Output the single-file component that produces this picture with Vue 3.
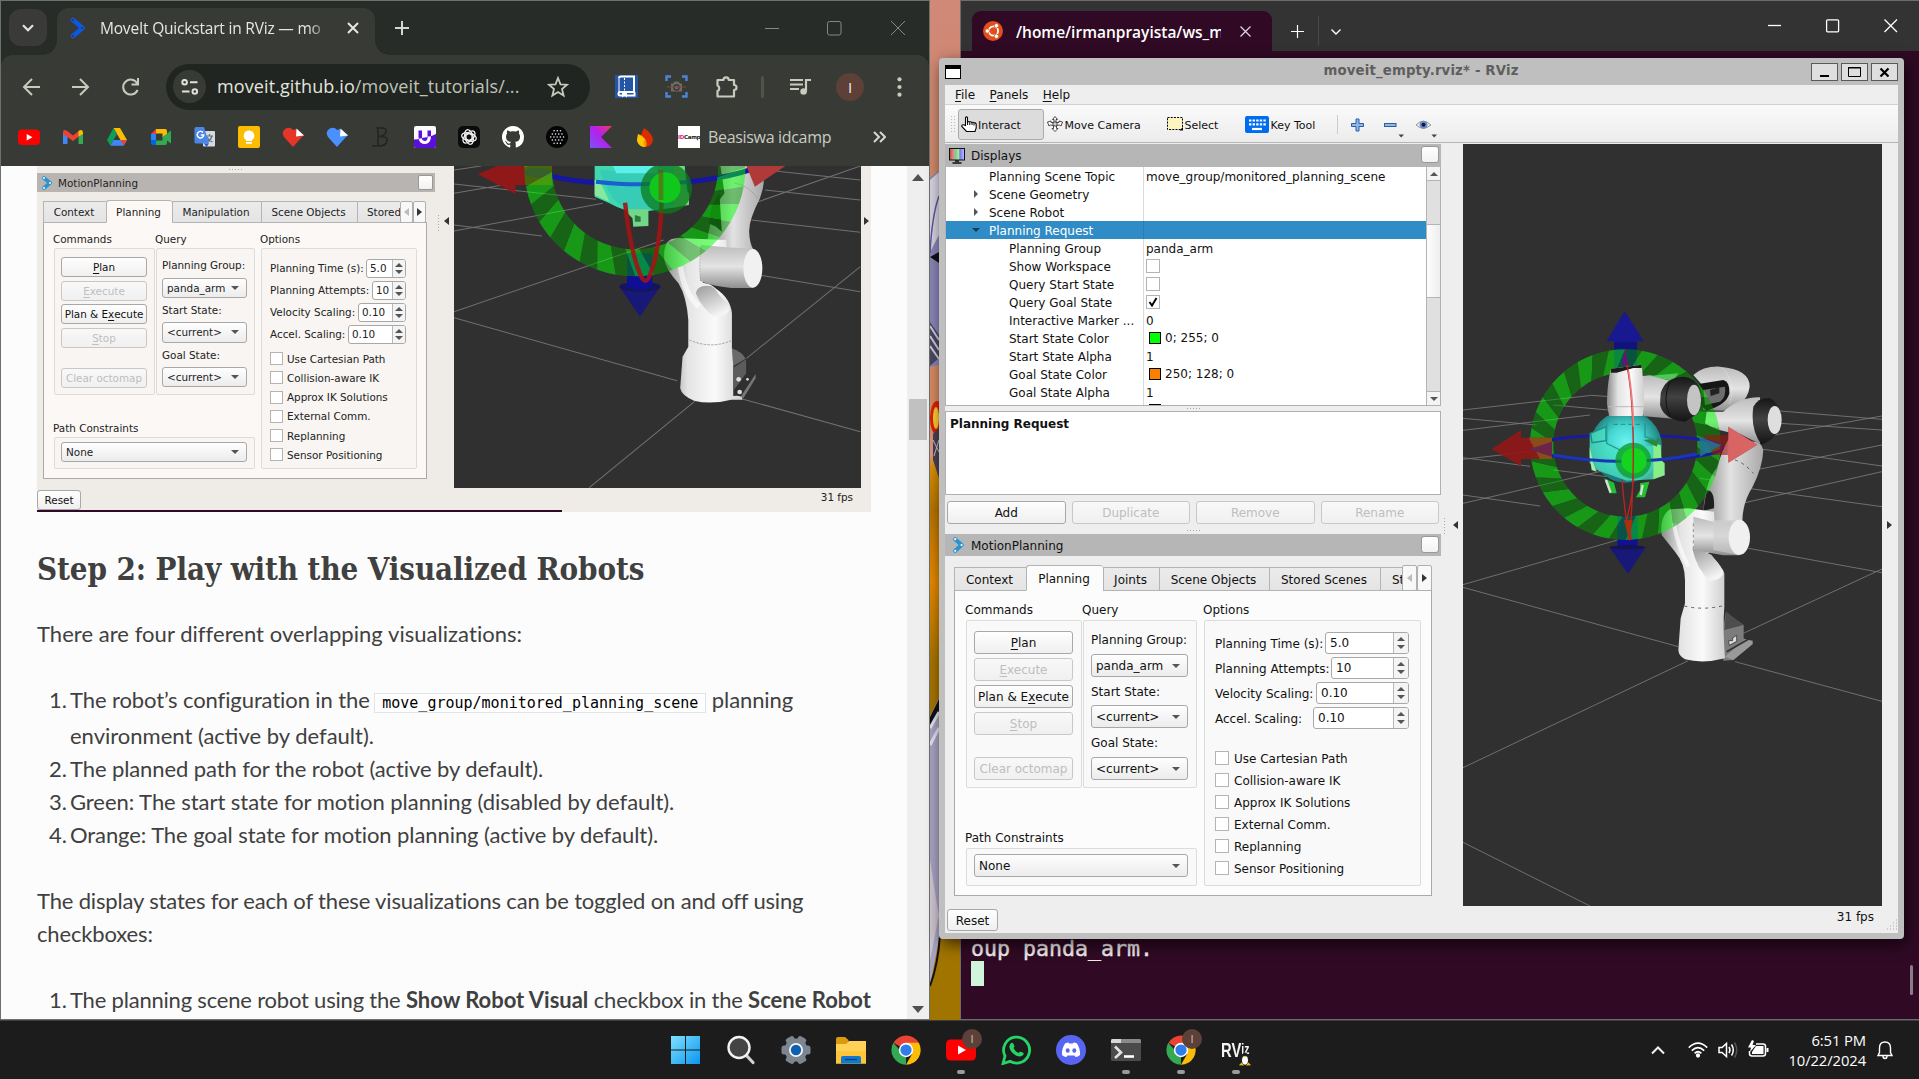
<script setup>
const bulkChecks = ['Use Cartesian Path', 'Collision-aware IK', 'Approx IK Solutions', 'External Comm.', 'Replanning', 'Sensor Positioning']

const treeRows = [
  { name: 'Planning Scene Topic', level: 1, value: 'move_group/monitored_planning_scene' },
  { name: 'Scene Geometry', level: 1, arrow: 'right' },
  { name: 'Scene Robot', level: 1, arrow: 'right' },
  { name: 'Planning Request', level: 1, arrow: 'down', selected: true },
  { name: 'Planning Group', level: 2, value: 'panda_arm' },
  { name: 'Show Workspace', level: 2, check: true },
  { name: 'Query Start State', level: 2, check: true },
  { name: 'Query Goal State', level: 2, check: true, on: true },
  { name: 'Interactive Marker ...', level: 2, value: '0' },
  { name: 'Start State Color', level: 2, color: '#00ff00', value: '0; 255; 0' },
  { name: 'Start State Alpha', level: 2, value: '1' },
  { name: 'Goal State Color', level: 2, color: '#fa8000', value: '250; 128; 0' },
  { name: 'Goal State Alpha', level: 2, value: '1' },
  { name: 'Colliding Link Color', level: 2, color: '#ff0000', value: '255; 0; 0' },
]

const spins = [
  { label: 'Planning Time (s):', value: '5.0', w: 84, sw: 40 },
  { label: 'Planning Attempts:', value: '10', w: 78, sw: 34 },
  { label: 'Velocity Scaling:', value: '0.10', w: 93, sw: 48 },
  { label: 'Accel. Scaling:', value: '0.10', w: 96, sw: 58 },
]

function ringSegments(cx, cy, ro, ri, n, skew) {
  const pt = (r, a) => `${(cx + r * Math.cos(a)).toFixed(1)} ${(cy + r * Math.sin(a)).toFixed(1)}`
  const out = []
  const step = (Math.PI * 2) / n
  for (let i = 0; i < n; i++) {
    const a = i * step
    const b = a + step
    out.push({
      d: `M${pt(ro, a)} A${ro} ${ro} 0 0 1 ${pt(ro, b)} L${pt(ri, b + skew)} A${ri} ${ri} 0 0 0 ${pt(ri, a + skew)}Z`,
      fill: i % 2 ? '#009800' : '#00ff00',
    })
  }
  return out
}
const ring = ringSegments(556, 464, 286, 216, 36, -0.14)
const shotRing = ringSegments(575, 22, 327, 246, 36, 0.12)
</script>

<template>
  <div class="desktop">
    <svg class="wallpaper" width="31" height="1020" viewBox="0 0 31 1020">
      <defs>
        <linearGradient id="wp" x1="0" y1="0" x2="0" y2="1">
          <stop offset="0" stop-color="#d08878" /><stop offset=".17" stop-color="#d08a6c" />
          <stop offset=".4" stop-color="#d98b62" /><stop offset=".445" stop-color="#e39a88" />
          <stop offset=".46" stop-color="#d99000" /><stop offset=".5" stop-color="#b87400" />
          <stop offset=".57" stop-color="#e88a00" /><stop offset=".65" stop-color="#a87400" /><stop offset="1" stop-color="#a07400" />
        </linearGradient>
      </defs>
      <rect width="31" height="1020" fill="url(#wp)" />
      <path d="M0 178 L9 171 V365 L0 367Z" fill="#8a86b8" />
      <path d="M0 180 L9 172 V235 L0 252Z" fill="#d8d4e2" />
      <path d="M0 253 Q2 215 9 196" stroke="#5a56a0" stroke-width="1.5" fill="none" />
      <path d="M0 257 L9 252 V263Z" fill="#111" />
      <path d="M0 322 L9 335 V358 L0 366Z" fill="#4b4862" />
      <path d="M0 326 L9 340 M0 336 L9 350 M0 346 L9 359" stroke="#d0cde0" stroke-width="2" />
      <ellipse cx="7" cy="418" rx="7" ry="17" fill="#e02000" />
      <ellipse cx="6" cy="418" rx="3" ry="11" fill="#ffd030" />
      <path d="M3 434 L9 428 V478 L3 460Z" fill="#4b4250" />
      <path d="M3 440 L9 452 M4 456 L9 440" stroke="#cfc9d8" />
      <path d="M0 716 L9 698 V939 L0 986Z" fill="#a9a3c2" />
      <path d="M0 717 L9 699 V712 L0 728Z" fill="#111" />
      <path d="M0 728 L9 712 M0 745 L9 728" stroke="#e4e2f2" stroke-width="3" />
      <path d="M0 860 L7 905 L9 915 L0 960Z" fill="#cfc6d2" />
      <path d="M0 986 Q8 965 10 935" stroke="#111" stroke-width="2" fill="none" />
    </svg>

    <!-- Browser window -->
    <section class="chrome">
      <div class="tabstrip">
        <span class="tabsearch"><svg width="12" height="8" viewBox="0 0 12 8"><path d="M1 1.2 L6 6.2 L11 1.2" fill="none" stroke="#e4e4e0" stroke-width="2.2" /></svg></span>
        <div class="ctab">
          <svg class="fav" width="16" height="22" viewBox="0 0 16 22"><path d="M3 3 L12.500 11 L3 19" fill="none" stroke="#0b57e8" stroke-width="4.600" stroke-linecap="round" stroke-linejoin="round" /><circle cx="3" cy="3" r="1.200" fill="#3b3e38" /><circle cx="12" cy="11" r="1.200" fill="#3b3e38" /><circle cx="3" cy="19" r="1.200" fill="#3b3e38" /></svg>
          <span class="ctitle">MoveIt Quickstart in RViz — mo</span>
          <svg width="12" height="12" viewBox="0 0 12 12"><path d="M1 1 L11 11 M11 1 L1 11" stroke="#e6e6e2" stroke-width="2" /></svg>
        </div>
        <svg class="newtab" width="14" height="14" viewBox="0 0 14 14"><path d="M7 0 V14 M0 7 H14" stroke="#d5d8d0" stroke-width="2" /></svg>
        <svg class="winctl" width="142" height="16" viewBox="0 0 142 16" fill="none" stroke="#858880" stroke-width="1"><path d="M0 8.500 H14" /><rect x="62.500" y="1.500" width="13.500" height="13.500" rx="2" /><path d="M126 1 L140 15 M140 1 L126 15" /></svg>
      </div>
      <div class="toolbar">
        <svg class="nav" width="118" height="22" viewBox="0 0 118 22" fill="none" stroke="#c6cbbd" stroke-width="2">
          <path d="M18 11 H2 M10 3 L2 11 L10 19" /><path d="M50 11 H66 M58 3 L66 11 L58 19" />
          <path d="M115.300 7.500 A7.500 7.500 0 1 0 115.600 14 M116 2 V8.500 H109.500" />
        </svg>
        <div class="omni">
          <span class="site"><svg width="18" height="16" viewBox="0 0 18 16" fill="none" stroke="#dfe2da" stroke-width="2"><circle cx="3.600" cy="3.200" r="2.300" /><path d="M9 3.200 H16.500 M1 12.500 H8.500" /><circle cx="13.800" cy="12.500" r="2.300" /></svg></span>
          <span class="url">moveit.github.io<i>/moveit_tutorials/...</i></span>
          <svg width="22" height="22" viewBox="0 0 22 22"><path d="M11 2 L13.500 8.300 L20 8.700 L15 13 L16.600 19.500 L11 16 L5.400 19.500 L7 13 L2 8.700 L8.500 8.300Z" fill="none" stroke="#c6cbbd" stroke-width="1.800" /></svg>
        </div>
        <svg class="ext e1" width="23" height="23" viewBox="0 0 23 23"><rect width="23" height="23" fill="#2456a8" /><path d="M4 3 Q4 1.500 6 1.500 H19 V17 H5 Q3.500 17 3.500 19 Q3.500 20.500 5 20.500 H19.500 V17" fill="none" stroke="#fff" stroke-width="2" /><path d="M4 2 V18" stroke="#fff" stroke-width="1" /><path d="M9.500 3 V16" stroke="#fff" stroke-dasharray="2 1.500" /><path d="M7 17.500 h5 v5 l-2.500-2 l-2.500 2z" fill="#fff" /></svg>
        <svg class="ext" width="23" height="23" viewBox="0 0 23 23" fill="none"><path d="M1.500 6 V1.500 H6 M17 1.500 H21.500 V6 M21.500 17 V21.500 H17 M6 21.500 H1.500 V17" stroke="#4a86d8" stroke-width="2.400" /><path d="M6 8.500 h2 l1.500-2 h4 l1.500 2 h2 v8 h-11z" fill="#6a6c66" /><circle cx="11.500" cy="12.500" r="2.600" stroke="#333" stroke-width="1.200" /><path d="M2 12 H21" stroke="#8b4238" stroke-width="1" /></svg>
        <svg class="ext" width="24" height="24" viewBox="0 0 24 24"><path d="M2.500 5 H8.500 A2.600 2.600 0 0 1 13.700 5 H19 V10 A2.400 2.400 0 0 1 19 15 V21.500 H2.500 V16 A3 3 0 0 0 2.500 10.500Z" fill="none" stroke="#c6cbbd" stroke-width="2.200" stroke-linejoin="round" /></svg>
        <i class="vsep"></i>
        <svg class="list" width="22" height="18" viewBox="0 0 22 18"><path d="M0 2 H13 M0 6.500 H13 M0 11 H9" stroke="#c6cbbd" stroke-width="2" /><path d="M16 13 V2 H21" fill="none" stroke="#c6cbbd" stroke-width="2.200" /><circle cx="13.600" cy="13.500" r="3.300" fill="#c6cbbd" /></svg>
        <span class="avatar">I</span>
        <svg class="dots3" width="5" height="20" viewBox="0 0 5 20" fill="#c6cbbd"><circle cx="2.500" cy="2.300" r="2.100" /><circle cx="2.500" cy="10" r="2.100" /><circle cx="2.500" cy="17.700" r="2.100" /></svg>
      </div>
      <div class="bookmarks">
        <span><svg viewBox="0 0 22 22"><rect y="3.500" width="22" height="15.500" rx="4" fill="#f00" /><path d="M8.700 8 V14.500 L14.500 11.200Z" fill="#fff" /></svg></span>
        <span><svg viewBox="0 0 22 22"><path d="M1 6 V18 H5.500 V9.500Z" fill="#4285f4" /><path d="M21 6 V18 H16.500 V9.500Z" fill="#34a853" /><path d="M1 6.500 Q1 3 4.500 4.500 L11 9.500 L17.500 4.500 V10 L11 15 L1 8Z" fill="#ea4335" /><path d="M16.500 10.500 V5 Q20.500 2.500 21 6.500 V8Z" fill="#fbbc04" /></svg></span>
        <span><svg viewBox="0 0 22 22"><path d="M7.500 2 H14 L21 14 H14.500Z" fill="#fbbc04" /><path d="M7.500 2 L11 8 L4.300 19.500 L1 14Z" fill="#0f9d58" /><path d="M4.300 19.800 L7.500 14 H21 L17.700 19.800Z" fill="#4285f4" /><path d="M14.500 14 H21 L17.700 19.500Z" fill="#ea4335" /></svg></span>
        <span><svg viewBox="0 0 22 22"><path d="M1 8 L6 3 V8Z" fill="#ea4335" /><path d="M6 3 H15 Q17 3 17 5 V11 H12.500 V7.500 H6Z" fill="#fbbc04" /><rect x="1" y="8" width="5" height="6.500" fill="#2684fc" /><path d="M1 14 H6 V19 H3 Q1 19 1 17Z" fill="#0066da" /><path d="M6 14.500 H12.500 V11 L21 4.500 V17.500 L17 14.500 V17 Q17 19 15 19 H6Z" fill="#34a853" /></svg></span>
        <span><svg viewBox="0 0 22 22"><rect x="9" y="5" width="12" height="15.500" rx="1" fill="#d6dbe0" /><path d="M12 10 h7 M15.500 8 v2 M13 16 Q17 14 18 10 M13 11 Q15 15 18.500 16" stroke="#607080" stroke-width="1.200" fill="none" /><path d="M2 1 H10 L15 17.500 H2 Q.5 17.500 .5 16 V2.500 Q.5 1 2 1Z" fill="#4a86e8" /><path d="M10 17.500 H15 L12.500 21Z" fill="#2a56c6" /><path d="M9 6.500 A3.300 3.300 0 1 0 9.800 9 H6.800" stroke="#fff" stroke-width="1.400" fill="none" /></svg></span>
        <span><svg viewBox="0 0 22 22"><rect width="22" height="22" rx="2" fill="#fbbc04" /><path d="M11 4.500 a5.200 5.200 0 0 1 3 9.500 v1 h-6 v-1 a5.200 5.200 0 0 1 3-9.500z M8 16 h6 v1.800 h-6z" fill="#fff" /></svg></span>
        <span v-for="c in ['#e53528', '#4a90ff']" :key="c"><svg viewBox="0 0 22 22"><path d="M11 21 L2 11 Q-1 6 3 3 Q8 0 11 4 L14 3 L22 9 L19 12Z" :fill="c" /><path d="M14.500 2.500 L22 9.500 L14 10.500Z" fill="#fff" /></svg></span>
        <span class="bee"><svg viewBox="0 0 22 22"><path d="M6 2 H12 Q17 2 16 6 Q15 10 9 10.500 M9 10.500 Q18 10 17 15 Q16 20 9 20 H2 M8 3 V19" stroke="#22251f" stroke-width="1.600" fill="none" /></svg></span>
        <span><svg viewBox="0 0 22 22"><rect width="22" height="22" rx="2" fill="#fbfaff" /><path d="M0 13.500 Q4 13.500 8 12 L14 11 Q18 10 22 8 V20 Q22 22 20 22 H2 Q0 22 0 20Z" fill="#5a10d8" /><path d="M4.500 4.500 H8 V11 Q8 13 9 13.500 L6 15 Q4.500 13 4.500 11Z M13.500 4.500 H17 V10 L13.500 11.500Z" fill="#5a10d8" /><path d="M6.200 12.500 Q7 16.500 11 16.500 Q15 16.500 15.400 10.500" stroke="#fff" stroke-width="3.200" fill="none" /></svg></span>
        <span><svg viewBox="0 0 22 22"><rect width="22" height="22" rx="5" fill="#0b0b0b" /><g fill="none" stroke="#f2f2f2" stroke-width="1.300"><ellipse v-for="a in [0, 60, 120]" :key="a" cx="11" cy="11" rx="7.500" ry="4" :transform="`rotate(${a + 15} 11 11)`" /><path d="M11 7.500 L14 9.200 V12.800 L11 14.500 L8 12.800 V9.200Z" /></g></svg></span>
        <span><svg viewBox="0 0 16 16"><path fill="#fff" d="M8 0C3.580 0 0 3.580 0 8c0 3.540 2.290 6.530 5.470 7.590.4.070.55-.17.55-.38 0-.19-.01-.82-.01-1.490-2.010.37-2.530-.49-2.690-.94-.09-.23-.48-.94-.82-1.130-.28-.15-.68-.52-.01-.53.63-.01 1.080.58 1.230.82.72 1.210 1.870.87 2.330.66.070-.52.28-.87.51-1.070-1.780-.2-3.640-.89-3.640-3.950 0-.87.31-1.590.82-2.150-.08-.2-.36-1.020.08-2.120 0 0 .67-.21 2.200.82.64-.18 1.320-.27 2-.27s1.360.09 2 .27c1.530-1.040 2.200-.82 2.200-.82.44 1.100.16 1.920.08 2.120.51.56.82 1.270.82 2.150 0 3.070-1.870 3.750-3.650 3.950.29.25.54.73.54 1.480 0 1.070-.01 1.930-.01 2.200 0 .21.15.46.55.38A8.010 8.010 0 0 0 16 8c0-4.420-3.580-8-8-8z" /></svg></span>
        <span><svg viewBox="0 0 22 22"><circle cx="11" cy="11" r="11" fill="#050505" /><g stroke="#e8e8e8" stroke-width="1.500" stroke-linecap="round" stroke-dasharray="0.100 3.100"><path d="M8 4.800 H15 M6.300 7.900 H17 M4.700 11 H18 M6.300 14.100 H17 M8 17.200 H15" /></g></svg></span>
        <span><svg viewBox="0 0 22 22"><defs><linearGradient id="kt" x1="1" y1="0" x2="0" y2="1"><stop offset="0" stop-color="#f03a5f" /><stop offset=".45" stop-color="#b81fe8" /><stop offset="1" stop-color="#7a52ff" /></linearGradient></defs><path d="M0 0 H22 L11 11 L22 22 H0Z" fill="url(#kt)" /></svg></span>
        <span><svg viewBox="0 0 22 22"><path d="M10 2 Q18 7 19 14 Q18 20 12 21 Q4 19 6 11 Q8 7 10 2Z" fill="#dd2c00" /><path d="M4 8 Q3 12 3 15 Q5 21 11 21 Q13 18 11 13 Q8 9 4 8Z" fill="#ffc400" /><path d="M11 13 Q14 18 11.500 21 Q8 19 11 13Z" fill="#ff9100" /></svg></span>
        <span class="idc"><b><i>ID</i>Camp</b></span>
        <em>Beasiswa idcamp</em>
        <svg class="more" width="13" height="12" viewBox="0 0 13 12"><path d="M1 1 L6 6 L1 11 M7 1 L12 6 L7 11" fill="none" stroke="#d5d8d0" stroke-width="2" /></svg>
      </div>

      <div class="viewport">
        <div class="page">
          <div class="shot">
            <div class="sdock">
              <div class="sdots"></div>
              <div class="dockhead"><svg width="10" height="14" viewBox="0 0 10 14"><path d="M2 2 L8 7 L2 12" fill="none" stroke="#2a94d0" stroke-width="3.600" stroke-linecap="round" /><circle cx="2" cy="2" r="1" fill="#fff" /><circle cx="8" cy="7" r="1" fill="#fff" /><circle cx="2" cy="12" r="1" fill="#fff" /></svg><span>MotionPlanning</span><i class="sq"></i></div>
              <div class="tabs">
                <span style="width:63px">Context</span><span class="on" style="width:66px">Planning</span><span style="width:89px">Manipulation</span><span style="width:96px">Scene Objects</span><span class="cut" style="width:43px">Stored</span>
                <b class="dim"><i></i></b><b><i></i></b>
              </div>
              <div class="pane">
                <div class="lcol">
                  <div class="duo">
                    <div class="c1"><label>Commands</label>
                      <div class="grp cmds"><button><u>P</u>lan</button><button class="off"><u>E</u>xecute</button><button>Plan &amp; E<u>x</u>ecute</button><button class="off"><u>S</u>top</button><button class="off last">Clear octomap</button></div></div>
                    <div class="c2"><label>Query</label>
                      <div class="grp query"><p>Planning Group:</p><div class="combo">panda_arm</div><p>Start State:</p><div class="combo">&lt;current&gt;</div><p>Goal State:</p><div class="combo">&lt;current&gt;</div></div></div>
                  </div>
                  <label class="pathl">Path Constraints</label>
                  <div class="grp path"><div class="combo">None</div></div>
                </div>
                <div class="rcol"><label>Options</label>
                  <div class="grp opts">
                    <div v-for="s in spins" :key="s.label" class="spinrow"><span>{{ s.label }}</span><div class="spin" :style="{ width: s.sw + 'px' }">{{ s.value }}<b></b></div></div>
                    <div class="checks"><div v-for="c in bulkChecks" :key="c"><i class="cb"></i>{{ c }}</div></div>
                  </div></div>
              </div>
              <button class="reset">Reset</button>
            </div>
            <div class="sash"><i class="vd"></i><i class="tri l"></i></div>
            <div class="sview">
              <svg width="407" height="322" viewBox="0 0 407 322">
                <rect width="407" height="322" fill="#303030" />
                <g transform="translate(-13.500 -6) scale(.33807 .33333)">
                  <g stroke="#707070" stroke-width="3" fill="none">
                    <path d="M40 30 L120 18 M40 72 L460 118 M40 100 L330 50 M940 125 L1242 18 M960 90 L1242 120 M960 30 L1242 60 M40 195 L300 228 M40 213 L480 130 M920 180 L1242 217 M40 455 L660 240 M940 345 L1242 395 M40 473 L700 662 M905 595 L1242 320 M890 716 L1242 815 M752 724 L440 983" />
                  </g>
                  <path d="M860 560 Q880 570 906 598 L908 636 L932 642 L894 718 L850 720Z" fill="#2f2f2f" />
                  <path d="M862 565 Q890 575 903 596 L866 618Z" fill="#6a6a6a" /><path d="M868 622 L904 598 V640 L868 690Z" fill="#5c5c5c" /><path d="M932 642 V655 L896 715 L888 710Z" fill="#777" /><circle cx="882" cy="658" r="7" fill="#ddd" /><circle cx="885" cy="696" r="7" fill="#ddd" /><circle cx="908" cy="658" r="4" fill="#ddd" />
                  <path d="M828 18 H955 Q962 70 945 115 Q912 180 913 215 Q914 250 926 270 L845 300 L790 240 Q800 150 840 100Z" fill="url(#met2)" />
                  <path d="M870 70 Q910 75 938 115" fill="none" stroke="#8b8b8b" stroke-width="2" stroke-dasharray="7 3" />
                  <path d="M662 300 Q658 250 682 238 L700 234 L845 240 L850 300 L775 368 Q800 370 815 386 Q858 415 862 460 V565 L866 618 V708 Q895 705 893 719 H860 Q800 735 750 722 Q714 708 709 685 L716 590 L733 560 V480 Q728 410 704 370 Q668 330 662 300Z" fill="url(#met)" />
                  <path d="M755 400 Q760 372 800 378 Q815 386 822 402 L855 440 Q855 470 810 472 Q770 440 755 400Z" fill="url(#dim)" />
                  <path d="M710 320 Q720 400 765 440" stroke="#fff" stroke-width="16" fill="none" opacity=".6" />
                  <path d="M736 540 Q800 568 860 542" stroke="#888" stroke-width="2" fill="none" stroke-dasharray="8 3" />
                  <path d="M770 255 L845 262 L925 266 V384 H860 Q790 375 768 362Z" fill="url(#metv)" /><ellipse cx="924" cy="325" rx="28" ry="58" fill="#f1f1f1" />
                  <path d="M770 260 Q765 310 769 362" stroke="#888" stroke-width="2" fill="none" stroke-dasharray="6 3" />
                  <path d="M793 190 Q800 130 825 100 L832 215 L815 200Z" fill="#1e1e1e" />
                  <path d="M250 26 Q380 75 585 72 Q800 70 920 28" fill="none" stroke="#1616a0" stroke-width="15" />
                  <path d="M110 42 L222 -5 V15 H330 V75 H222 V102Z" fill="#901818" /><path d="M248 18 H330 V75 H250Z" fill="#8a4c18" opacity=".6" /><ellipse cx="288" cy="38" rx="40" ry="15" fill="#6c2468" opacity=".8" /><path d="M905 18 H1020 L930 80Z" fill="#b03a3a" />
                  <path d="M456 18 H722 L735 130 L700 142 L620 152 Q560 165 500 130 L456 110Z" fill="#3fd8b0" />
                  <path d="M470 30 Q500 120 540 140 Q620 170 680 120 V40Z" fill="#35c9b8" opacity=".8" /><path d="M510 18 H640 V40 H520Z" fill="#5cf0ea" />
                  <path d="M456 60 L470 60 L500 125 L456 105Z" fill="#8ae89a" /><path d="M690 18 H722 V90 L735 100 V135 L690 142Z" fill="#6fd877" />
                  <path d="M460 65 Q580 80 730 66" fill="none" stroke="#1a5fd0" stroke-width="12" />
                  <path d="M553 148 H615 V198 L570 200 L568 175 L553 160Z" fill="#70d887" /><path d="M575 165 L592 170 V185 H575Z" fill="#2c7a40" />
                  <path d="M552 280 H626 V385 H552Z" fill="#10108a" /><path d="M528 378 H651 L590 470Z" fill="#181878" /><ellipse cx="590" cy="380" rx="61" ry="15" fill="#15155e" /><path d="M552 350 H626 V380 Q590 396 552 380Z" fill="#0e0e96" />
                  <g opacity=".5"><path v-for="(s, i) in shotRing" :key="i" :d="s.d" :fill="s.fill" /></g>
                  <path d="M546 128 Q562 280 594 350 Q606 375 618 350 Q652 260 654 120" fill="none" stroke="#a01515" stroke-width="13" opacity=".9" />
                  <circle cx="668" cy="85" r="76" fill="#0a7a1a" opacity=".75" /><circle cx="664" cy="83" r="46" fill="#10c81c" />
                  <path d="M652 30 V120" stroke="#8a3a10" stroke-width="14" opacity=".5" />
                </g>
              </svg>
              <div class="sfps">31 fps</div>
            </div>
            <div class="sash r"><i class="tri r"></i></div>
          </div>
          <article>
            <h2>Step 2: Play with the Visualized Robots</h2>
            <p class="lead">There are four different overlapping visualizations:</p>
            <ol>
              <li><div class="first">The robot’s configuration in the <code>move_group/monitored_planning_scene</code> planning</div>environment (active by default).</li>
              <li class="k2">The planned path for the robot (active by default).</li>
              <li class="k3">Green: The start state for motion planning (disabled by default).</li>
              <li class="k4">Orange: The goal state for motion planning (active by default).</li>
            </ol>
            <p class="two">The display states for each of these visualizations can be toggled on and off using<br />checkboxes:</p>
            <ol><li class="k5">The planning scene robot using the <strong>Show Robot Visual</strong> checkbox in the <strong>Scene Robot</strong></li></ol>
          </article>
        </div>
        <div class="vscroll"><i class="up"></i><i class="thumb"></i><i class="down"></i></div>
      </div>
    </section>

    <!-- Terminal window -->
    <section class="term">
      <header>
        <div class="ttab">
          <svg width="20" height="20" viewBox="0 0 20 20"><circle cx="10" cy="10" r="10" fill="#e04e1b" /><circle cx="10.500" cy="10" r="4.600" fill="none" stroke="#fff" stroke-width="1.800" /><g fill="#fff" stroke="#e04e1b" stroke-width=".8"><circle cx="4.300" cy="10" r="2.200" /><circle cx="13.400" cy="4.700" r="2.200" /><circle cx="13.400" cy="15.300" r="2.200" /></g></svg>
          <span>/home/irmanprayista/ws_m</span>
          <svg width="11" height="11" viewBox="0 0 11 11"><path d="M.5 .5 L10.500 10.500 M10.500 .5 L.5 10.500" stroke="#e0dade" stroke-width="1.200" /></svg>
        </div>
        <svg class="tplus" width="13" height="13" viewBox="0 0 13 13"><path d="M6.500 0 V13 M0 6.500 H13" stroke="#fff" stroke-width="1.200" /></svg>
        <i class="tsep"></i>
        <svg class="tchev" width="10" height="6" viewBox="0 0 10 6"><path d="M.5 .5 L5 5 L9.500 .5" fill="none" stroke="#fff" stroke-width="1.400" /></svg>
        <svg class="twin" width="130" height="14" viewBox="0 0 130 14" fill="none" stroke="#fff" stroke-width="1.300"><path d="M0 6.500 H13" /><rect x="58.600" y=".8" width="12" height="12" rx="1" /><path d="M116.500 .5 L129 13 M129 .5 L116.500 13" /></svg>
      </header>
      <div class="tbody"><div class="tline">oup panda_arm.</div><i class="cursor"></i></div>
      <i class="tscroll"></i>
    </section>

    <!-- RViz window -->
    <section class="rviz">
      <header><i class="wicon"></i><b>moveit_empty.rviz* - RViz</b>
        <span><svg width="27" height="18" viewBox="0 0 27 18"><rect x=".5" y=".5" width="26" height="17" fill="#dfdfdf" stroke="#5a5a5a" /><path d="M9 13 H18" stroke="#000" stroke-width="2" /></svg><svg width="27" height="18" viewBox="0 0 27 18"><rect x=".5" y=".5" width="26" height="17" fill="#dfdfdf" stroke="#5a5a5a" /><path d="M7.500 13.500 V4.500 H19.500 V13.500Z M7 5 H20" fill="none" stroke="#000" /></svg><svg width="27" height="18" viewBox="0 0 27 18"><rect x=".5" y=".5" width="26" height="17" fill="#dfdfdf" stroke="#5a5a5a" /><path d="M9.500 5.500 L17.500 13.500 M17.500 5.500 L9.500 13.500" stroke="#000" stroke-width="2.200" /></svg></span>
      </header>
      <div class="inner">
        <nav><span><u>F</u>ile</span><span><u>P</u>anels</span><span><u>H</u>elp</span></nav>
        <div class="rtools">
          <i class="handle"></i>
          <span class="tool act"><svg width="17" height="17" viewBox="0 0 17 17"><path d="M4.500 9.500 V1.500 Q5.500 .3 6.500 1.500 V6 Q7.500 5 8.600 6 Q9.800 5.300 10.800 6.500 Q12 5.800 13 7 Q14.500 6.500 15.200 8 V12 L14 15.500 H5.500 L.8 10.500 Q.5 8.500 2.500 8.800Z" fill="#fff" stroke="#000" stroke-width="1.100" /><path d="M6.600 6 V9 M8.800 6.500 V9 M11 6.800 V9 M13 7.500 V9.500" stroke="#000" /></svg><b>Interact</b></span>
          <span class="tool t2"><svg width="16" height="16" viewBox="0 0 16 16" fill="#fff" stroke="#333" stroke-width=".9"><path d="M8 .5 L10.500 3.500 H9 V6.500 H12 L12 5 L15.500 6 L14 10 L12.500 9 L9.500 9.500 V12.500 H11 L8 15.500 L5 12.500 H6.500 V9.500 L3.500 9 L2 10 L.5 6 L4 5 V6.500 H7 V3.500 H5.500Z" /><circle cx="8" cy="8" r="2.200" fill="#ccc" /></svg><b>Move Camera</b></span>
          <span class="tool t3"><svg width="16" height="14" viewBox="0 0 16 14"><rect x=".5" y=".5" width="15" height="12" fill="#fdf5bf" stroke="#000" stroke-dasharray="2 1.200" /><path d="M16 10 V13.500 H12.500Z" /></svg><b>Select</b></span>
          <span class="tool t4"><svg width="24" height="17" viewBox="0 0 24 17"><rect width="24" height="17" rx="2" fill="#006cf0" /><path d="M4 4.500 H21 M4 8.300 H21" stroke="#fff" stroke-width="2.200" stroke-dasharray="2.400 1.200" /><path d="M7 13 H17" stroke="#fff" stroke-width="2.200" /></svg><b>Key Tool</b></span>
          <i class="rsep"></i>
          <svg class="pm" width="90" height="28" viewBox="0 0 90 28"><path d="M5 5 H8 V9.500 H12.500 V12.500 H8 V17 H5 V12.500 H.5 V9.500 H5Z" fill="#8fb8e6" stroke="#2a5fa8" /><rect x="33.500" y="9.500" width="11.500" height="3" fill="#8fb8e6" stroke="#2a5fa8" /><path d="M47.500 20.500 H53 L50.200 23.500Z M80.500 20.500 H86 L83.200 23.500Z" fill="#444" /><path d="M65 11 Q72 3.500 80 11 Q72 17.500 65 11Z" fill="#eee" stroke="#999" /><circle cx="72.500" cy="10.800" r="4" fill="#6d8fc8" /><circle cx="72.500" cy="10.800" r="2" fill="#101840" /></svg>
        </div>
        <div class="work">
          <div class="dock">
            <div class="dockhead d1"><svg width="16" height="16" viewBox="0 0 16 16"><defs><linearGradient id="mon"><stop offset="0" stop-color="#c04848" /><stop offset=".33" stop-color="#e0a0a0" /><stop offset=".34" stop-color="#70c870" /><stop offset=".66" stop-color="#b0f0b0" /><stop offset=".67" stop-color="#7070e8" /><stop offset="1" stop-color="#c0c0ff" /></linearGradient></defs><rect x=".5" y=".5" width="15" height="11.500" fill="url(#mon)" stroke="#111" /><path d="M6 13 H10 M3.500 15 H12.500" stroke="#111" stroke-width="1.500" /></svg><span>Displays</span><i class="sq"></i></div>
            <div class="tree">
              <div class="rows">
                <div v-for="r in treeRows" :key="r.name" class="row" :class="{ sel: r.selected }">
                  <div class="nm" :class="'l' + r.level"><i v-if="r.arrow" class="ar" :class="r.arrow"></i>{{ r.name }}</div>
                  <div class="vl"><i v-if="r.check" class="cb"><svg v-if="r.on" width="12" height="12" viewBox="0 0 12 12"><path d="M2.500 6 L5 9.500 L9.500 2" fill="none" stroke="#000" stroke-width="1.900" /></svg></i><i v-if="r.color" class="sw" :style="{ background: r.color }"></i><span :class="{ up1: r.color }">{{ r.value }}</span></div>
                </div>
              </div>
              <div class="tsb"><i class="tb u"></i><i class="th"></i><i class="tb d"></i></div>
            </div>
            <div class="hd"></div>
            <div class="desc">Planning Request</div>
            <div class="btns"><button>Add</button><button class="off">Duplicate</button><button class="off">Remove</button><button class="off">Rename</button></div>
            <div class="hd h2"></div>
            <div class="dockhead d2"><svg width="11" height="16" viewBox="0 0 11 16"><path d="M2.200 2.200 L8.600 8 L2.200 13.800" fill="none" stroke="#2a94d0" stroke-width="4" stroke-linecap="round" /><circle cx="2.200" cy="2.200" r="1.100" fill="#fff" /><circle cx="8.600" cy="8" r="1.100" fill="#fff" /><circle cx="2.200" cy="13.800" r="1.100" fill="#fff" /></svg><span>MotionPlanning</span><i class="sq"></i></div>
            <div class="tabs">
              <span style="width:72px">Context</span><span class="on" style="width:77px">Planning</span><span style="width:56px">Joints</span><span style="width:110px">Scene Objects</span><span style="width:111px">Stored Scenes</span><span class="cut" style="width:22px">St</span>
              <b class="dim"><i></i></b><b><i></i></b>
            </div>
            <div class="pane">
              <div class="lcol">
                <div class="duo">
                  <div class="c1"><label>Commands</label>
                    <div class="grp cmds"><button><u>P</u>lan</button><button class="off"><u>E</u>xecute</button><button>Plan &amp; E<u>x</u>ecute</button><button class="off"><u>S</u>top</button><button class="off last">Clear octomap</button></div></div>
                  <div class="c2"><label>Query</label>
                    <div class="grp query"><p class="p1">Planning Group:</p><div class="combo">panda_arm</div><p>Start State:</p><div class="combo">&lt;current&gt;</div><p class="p3">Goal State:</p><div class="combo">&lt;current&gt;</div></div></div>
                </div>
                <label class="pathl">Path Constraints</label>
                <div class="grp path"><div class="combo">None</div></div>
              </div>
              <div class="rcol"><label>Options</label>
                <div class="grp opts">
                  <div v-for="s in spins" :key="s.label" class="spinrow"><span>{{ s.label }}</span><div class="spin" :style="{ width: s.w + 'px' }">{{ s.value }}<b></b></div></div>
                  <div class="checks"><div v-for="c in bulkChecks" :key="c"><i class="cb"></i><span>{{ c }}</span></div></div>
                </div></div>
            </div>
            <button class="reset">Reset</button>
          </div>
          <div class="rsash"><i class="vd"></i><i class="tri l"></i></div>
          <div class="rview">
            <svg width="419" height="762" viewBox="0 0 419 762">
              <defs>
                <linearGradient id="met"><stop offset="0" stop-color="#8a8a8a" /><stop offset=".3" stop-color="#e4e4e4" /><stop offset=".65" stop-color="#fafafa" /><stop offset="1" stop-color="#cfcfcf" /></linearGradient>
                <linearGradient id="met2"><stop offset="0" stop-color="#8c8c8c" /><stop offset=".45" stop-color="#e2e2e2" /><stop offset="1" stop-color="#a8a8a8" /></linearGradient>
                <linearGradient id="metv" x1="0" y1="0" x2="0" y2="1"><stop offset="0" stop-color="#bcbcbc" /><stop offset=".5" stop-color="#e4e4e4" /><stop offset="1" stop-color="#8f8f8f" /></linearGradient>
                <linearGradient id="dim" x1="0" y1="0" x2=".5" y2="1"><stop offset="0" stop-color="#9a9a9a" /><stop offset="1" stop-color="#f4f4f4" /></linearGradient>
                <linearGradient id="blk" x1="0" y1="0" x2="0" y2="1"><stop offset="0" stop-color="#161616" /><stop offset=".45" stop-color="#424242" /><stop offset="1" stop-color="#141414" /></linearGradient>
                <radialGradient id="cy" cx=".5" cy=".45"><stop offset="0" stop-color="#6ef4f2" /><stop offset=".5" stop-color="#45d6d0" /><stop offset="1" stop-color="#1d7c7c" /></radialGradient>
              </defs>
              <rect width="419" height="762" fill="#303030" />
              <g transform="translate(-23 146) scale(.33333)">
                <g stroke="#7c7c7c" stroke-width="2.500" fill="none">
                  <path d="M69 360 L455 316 L510 320 M69 385 L290 405 M69 421 L450 375 M69 508 L330 478 M340 345 L505 360 M69 503 L270 529 M340 540 L500 560 M69 640 L500 540 M69 615 L300 648 M1020 363 L1326 388 M1020 400 L1326 420 M975 440 L1326 378 M970 478 L1326 528 M945 540 L1326 465 M780 565 L830 572 M925 595 L1326 650 M915 638 L1326 545 M69 884 L560 742 M925 775 L1326 848 M69 892 L715 1070 M910 1030 L1326 837 M745 1112 L69 1433 M885 1115 L1326 1234 M69 1657 L450 1848" />
                </g>
                <path d="M850 1015 L858 965 Q880 985 911 1005 V1045 L938 1062 L880 1110 L850 1112Z" fill="#7c7c7c" /><path d="M858 965 Q885 985 911 1005 L853 1020Z" fill="#4e4e4e" />
                <path d="M880 1110 L938 1062 V1052 L915 1048 L855 1100Z" fill="#9a9a9a" /><path d="M860 1085 L925 1048" stroke="#333" stroke-width="5" /><path d="M866 1052 h12 v-8 l12 -8 v18 l-22 12z" fill="#ddd" stroke="#222" stroke-width="2" />
                <path d="M760 255 Q790 228 840 230 Q930 238 929 290 Q920 350 850 362 L790 360 L782 280Z" fill="url(#metv)" />
                <path d="M775 282 L850 270 Q870 275 868 310 Q860 345 800 362 L775 340Z" fill="#161616" /><path d="M790 300 L855 290 Q860 320 840 335 L795 345Z" fill="#6d6d6d" /><path d="M810 300 L838 292 V310 L812 318Z" fill="#222" />
                <path d="M848 235 Q890 280 868 345" fill="none" stroke="#eee" stroke-width="2" stroke-dasharray="5 4" />
                <path d="M940 455 Q965 455 970 480 Q968 530 938 590 Q906 640 907 700 L850 740 L790 660 Q798 570 830 535 Q850 470 870 440Z" fill="url(#met2)" />
                <path d="M800 600 Q825 600 822 655 L790 662Z" fill="#1f1f1f" />
                <path d="M850 365 Q900 320 960 322 V462 L900 432 Q830 425 795 400 L800 365Z" fill="url(#metv)" />
                <path d="M940 350 Q955 322 990 325 Q1020 340 1022 385 Q1020 445 965 464 Q930 420 940 350Z" fill="url(#blk)" /><ellipse cx="1004" cy="390" rx="21" ry="42" fill="#dedede" />
                <path d="M665 735 Q658 680 690 658 L745 655 L822 665 L828 780 L795 792 Q830 800 853 850 V950 Q848 1010 855 1105 Q790 1122 735 1108 Q716 1098 715 1080 L722 985 L735 940 V870 Q735 820 705 785Z" fill="url(#met)" />
                <path d="M702 700 Q710 760 745 830" stroke="#fff" stroke-width="12" fill="none" opacity=".6" />
                <path d="M757 775 Q790 780 815 795 L850 842 Q850 870 810 872 Q770 840 757 775Z" fill="url(#dim)" />
                <path d="M733 948 Q790 962 855 946 M885 510 Q915 520 940 550" fill="none" stroke="#444" stroke-width="2.500" stroke-dasharray="9 12" />
                <path d="M760 680 L820 695 H897 V796 H850 L762 780Z" fill="url(#metv)" /><path d="M820 690 V780 L897 796 V690Z" fill="#cfcfcf" opacity=".6" /><ellipse cx="898" cy="742" rx="32" ry="53" fill="#f0f0f0" />
                <path d="M760 700 V775" stroke="#666" stroke-width="2" stroke-dasharray="9 8" />
                <path d="M554 63 L611 154 H590 V235 H523 V154 H500Z" fill="#181890" /><path d="M523 156 H590 V235 H523Z" fill="#12127c" />
                <path d="M532 680 H593 V778 H532Z" fill="#101090" /><path d="M508 772 H617 L564 852Z" fill="#181878" /><ellipse cx="562" cy="772" rx="54" ry="6" fill="#14144e" />
                <g opacity=".5"><path v-for="(s, i) in ring" :key="i" :d="s.d" :fill="s.fill" /></g>
                <ellipse cx="558" cy="473" rx="290" ry="38" fill="none" stroke="#1a1aa0" stroke-width="9" />
                <path d="M155 477 L243 420 V443 H336 V507 H243 V529Z" fill="#901818" opacity=".93" /><path d="M266 443 H336 V507 H300Z" fill="#8a4c18" /><path d="M266 478 L336 455 V500Z" fill="#6c2448" />
                <path d="M790 435 H865 V410 L952 464 L865 518 V495 H820Z" fill="#a01010" opacity=".6" /><path d="M865 410 L952 464 L865 518Z" fill="#d86464" />
                <path d="M778 440 L845 465 L780 500Z" fill="#23709c" opacity=".85" />
                <path d="M606 258 L630 256 L700 275 V386 L606 378Z" fill="url(#metv)" /><path d="M625 258 L700 272 L715 250Z" fill="#6fd877" opacity=".7" />
                <path d="M662 310 Q675 262 730 260 Q765 262 780 295 Q792 330 775 370 L735 395 Q672 390 660 345Z" fill="url(#blk)" /><path d="M690 275 Q665 330 690 378" fill="none" stroke="#111" stroke-width="3" /><ellipse cx="762" cy="330" rx="21" ry="46" fill="#c4c4c4" />
                <circle cx="558" cy="470" r="108" fill="url(#cy)" />
                <path d="M449 430 L500 410 V455 L540 475 L655 465 L668 520 L674 555 L640 568 L560 572 L470 540 L449 520Z" fill="#4be3c4" opacity=".75" />
                <path d="M640 460 L662 465 L665 512 L674 520 V556 L640 568Z" fill="#88ee88" /><path d="M449 470 L460 520 L470 545 L455 540 L449 500Z" fill="#a0f0a8" /><path d="M610 450 L660 445 L650 470Z" fill="#2b8a3a" /><path d="M452 430 L498 410 V452 L456 458Z" fill="none" stroke="#1d8a84" stroke-width="4" /><path d="M500 400 V460 L540 480 M615 400 V440 L650 450" fill="none" stroke="#229a96" stroke-width="4" />
                <path d="M492 565 L522 578 L530 610 H508 L500 585Z M600 580 L628 575 L615 622 H588 L600 600Z" fill="#22c030" /><path d="M498 570 L512 608 M608 585 L602 615" stroke="#ddd" stroke-width="7" />
                <path d="M513 236 L605 224 Q612 290 613 340 L608 378 H508 Q500 350 501 330 Q503 270 513 236Z" fill="url(#met)" /><path d="M513 236 L605 224 V234 L580 234 L530 248 H513Z" fill="#1c1c1c" />
                <path d="M504 350 H612" stroke="#bbb" stroke-width="3" /><path d="M520 403 H600" stroke="#187070" stroke-width="2" stroke-dasharray="14 8" />
                <path d="M340 495 Q560 535 770 492" fill="none" stroke="#1a35b8" stroke-width="9" />
                <circle cx="580" cy="512" r="54" fill="#0b9a1c" opacity=".75" /><circle cx="582" cy="512" r="38" fill="#14d420" />
                <path d="M554 180 L565 250 Q580 340 580 500 Q578 650 568 750 Q552 650 546 568 M580 560 Q578 620 560 690 L575 750" fill="none" stroke="#c02020" stroke-width="4" /><path d="M566 245 Q580 340 580 410" stroke="#f08080" stroke-width="5" fill="none" /><path d="M554 180 L545 225 L568 225Z" fill="#601878" /><path d="M552 690 L578 690 L568 755Z" fill="#a83010" />
              </g>
            </svg>
            <div class="fps">31 fps</div>
          </div>
          <div class="rsash2"><i class="tri r"></i><svg class="grip" width="12" height="12" viewBox="0 0 12 12"><path d="M10 1 h1 M7 4 h4 M4 7 h7 M1 10 h10" stroke="#aaa" stroke-width="1" stroke-dasharray="1 2" /></svg></div>
        </div>
      </div>
    </section>

    <!-- Taskbar -->
    <footer class="taskbar">
      <div class="apps">
        <span><svg viewBox="0 0 30 30"><defs><linearGradient id="win" x1="0" y1="0" x2="1" y2="1"><stop offset="0" stop-color="#7fe0ff" /><stop offset="1" stop-color="#0a96f0" /></linearGradient></defs><path d="M0 1 H14 V14.500 H0Z M15 1 H29 V14.500 H15Z M0 15.500 H14 V29 H0Z M15 15.500 H29 V29 H15Z" fill="url(#win)" /></svg></span>
        <span><svg viewBox="0 0 30 30"><path d="M20 20 L27 27.500" stroke="#cfd2d8" stroke-width="3.200" stroke-linecap="round" /><circle cx="13" cy="12.500" r="10.500" fill="#444" stroke="#f2f2f2" stroke-width="2.400" /></svg></span>
        <span><svg viewBox="0 0 30 30"><g fill="#7c8590"><circle cx="15" cy="15" r="11.500" /><rect v-for="a in [0, 60, 120]" :key="a" x="10.500" y="0.500" width="9" height="29" rx="2.500" :transform="`rotate(${a + 30} 15 15)`" /></g><circle cx="15" cy="15" r="7" fill="#f3f5f7" /><circle cx="15" cy="15" r="5.200" fill="#0d5fb0" /></svg></span>
        <span><svg viewBox="0 0 30 30"><path d="M0 4 Q0 2 2 2 H9 L12.500 5 V12 H0Z" fill="#d99a10" /><path d="M0 9 H10 L13 6 H30 V28.500 H0Z" fill="#ffd257" /><path d="M0 16 H30 V28.500 H0Z" fill="#fdc63a" /><path d="M5 28.500 V23 Q5 21 7 21 H23 Q25 21 25 23 V28.500Z" fill="#0f78d0" /><path d="M9 24.500 H21" stroke="#073f78" stroke-width="1.200" /></svg></span>
        <span><svg viewBox="0 0 48 48"><path d="M24 24 L4 12.500 A23.500 23.500 0 0 1 44.500 12.500Z" fill="#ea4335" /><path d="M24 24 L24 47.500 A23.500 23.500 0 0 1 3.700 12.300 L14 24Z" fill="#34a853" /><path d="M24 12.500 H44.500 A23.500 23.500 0 0 1 24 47.500 L34 30Z" fill="#fbbc05" /><circle cx="24" cy="24" r="11.500" fill="#fff" /><circle cx="24" cy="24" r="9" fill="#2f7de9" /></svg></span>
        <span class="run"><svg viewBox="0 0 30 30"><rect y="4.500" width="30" height="21" rx="4.500" fill="#f00" /><path d="M12 10.500 V19.500 L20 15Z" fill="#fff" /></svg><b class="badge">I</b></span>
        <span><svg viewBox="0 0 30 30"><path d="M2 28.500 L4 21 A13 13 0 1 1 9 26.300Z" fill="#1c1c1c" stroke="#25d366" stroke-width="2.800" /><path d="M10 8 Q12 7 13 10 Q14 11.500 12.500 13 Q14 16.500 17.500 18 Q19 16 20.500 17 Q23.500 18 22.500 19.500 Q20 23 15 20.500 Q10 18 8.500 13 Q8 10 10 8Z" fill="#25d366" /></svg></span>
        <span><svg viewBox="0 0 30 30"><circle cx="15" cy="15" r="15" fill="#5865f2" /><path d="M9 8.500 Q11 7.500 12.500 7.500 L13 8.500 H17 L17.500 7.500 Q19.500 7.500 21 8.500 Q24.500 14 24 20 Q22 22 19.500 22 L18.500 20.500 H11.500 L10.500 22 Q8 22 6 20 Q5.500 14 9 8.500Z" fill="#fff" /><ellipse cx="11.700" cy="15.500" rx="2" ry="2.300" fill="#5865f2" /><ellipse cx="18.300" cy="15.500" rx="2" ry="2.300" fill="#5865f2" /></svg></span>
        <span class="run"><svg viewBox="0 0 30 30"><rect y="4" width="30" height="22" rx="1.500" fill="#4b4b4b" /><path d="M0 8 V5.500 Q0 4 1.500 4 H28.500 Q30 4 30 5.500 V8Z" fill="#8a8a8a" /><path d="M0 8 V5.500 Q0 4 1.500 4 H10 V8Z" fill="#d8d8d8" /><path d="M4 11.500 L10 17.500 L4 23" fill="none" stroke="#e2e2e2" stroke-width="2.600" /><path d="M13 21.500 H23" stroke="#fff" stroke-width="2.600" /></svg></span>
        <span class="run"><svg viewBox="0 0 48 48"><path d="M24 24 L4 12.500 A23.500 23.500 0 0 1 44.500 12.500Z" fill="#ea4335" /><path d="M24 24 L24 47.500 A23.500 23.500 0 0 1 3.700 12.300 L14 24Z" fill="#34a853" /><path d="M24 12.500 H44.500 A23.500 23.500 0 0 1 24 47.500 L34 30Z" fill="#fbbc05" /><circle cx="24" cy="24" r="11.500" fill="#fff" /><circle cx="24" cy="24" r="9" fill="#2f7de9" /></svg><b class="badge">I</b></span>
        <span class="run rv"><em>RV<small>iz</small></em><svg class="tux" viewBox="0 0 14 16"><ellipse cx="7" cy="8" rx="4.500" ry="7.500" fill="#222" /><ellipse cx="7" cy="9.500" rx="3.400" ry="5" fill="#fff" /><path d="M0 15 L3 12 L6 15.500Z M14 15 L11 12 L8 15.500Z M5.500 4.500 h3 l-1.500 1.800z" fill="#f5b818" /></svg></span>
      </div>
      <div class="tray">
        <svg width="14" height="9" viewBox="0 0 14 9"><path d="M1 7.500 L7 1.500 L13 7.500" fill="none" stroke="#f2f2f2" stroke-width="2" /></svg>
        <svg class="wf" width="20" height="16" viewBox="0 0 20 16" fill="none" stroke="#fff" stroke-width="1.700"><path d="M.8 5.600 Q10 -3.400 19.200 5.600 M3.800 8.600 Q10 2.600 16.200 8.600 M6.600 11.300 Q10 8.200 13.400 11.300" /><circle cx="10" cy="13.500" r="1.300" fill="#fff" /></svg>
        <svg class="sp" width="20" height="18" viewBox="0 0 20 18" fill="none" stroke="#fff" stroke-width="1.500"><path d="M1 6.500 H4 L8.500 2.500 V15.500 L4 11.500 H1Z" /><path d="M11 6 Q13 9 11 12 M13.500 3.500 Q17 9 13.500 14.500" /><path d="M16.500 1.500 Q21 9 16.500 16.500" stroke="#555" /></svg>
        <svg class="ba" width="21" height="18" viewBox="0 0 21 18"><path d="M8 4 H15 Q17.500 4 17.500 6.500 V13.500 Q17.500 16 15 16 H4 Q1.500 16 1.500 13.500 V11" fill="none" stroke="#fff" stroke-width="1.500" /><path d="M8 6 H15.500 V14 H4 V12Z" fill="#fff" /><path d="M4 0 L0 7.500 H3 L2 12 L8 5 H4.500 L6 1Z" fill="#fff" /><path d="M18.500 8 h2 v4 h-2z" fill="#fff" /></svg>
        <div class="clock">6:51 PM<br />10/22/2024</div>
        <svg class="bell" width="16" height="19" viewBox="0 0 16 19" fill="none" stroke="#fff" stroke-width="1.400"><path d="M1 14.500 L2.500 11.500 V7 Q2.500 1 8 1 Q13.500 1 13.500 7 V11.500 L15 14.500Z" /><path d="M6 15 Q6 17.500 8 17.500 Q10 17.500 10 15" /></svg>
      </div>
    </footer>
  </div>
</template>

<style>
html, body { margin: 0; overflow: hidden; background: #1c1c1c; }
</style>

<style scoped>
* { box-sizing: border-box; }
i, em { font-style: normal; }
svg { display: block; flex: none; }
u { text-decoration: underline; text-underline-offset: 2px; }
.desktop { position: relative; width: 1919px; height: 1079px; overflow: hidden; }
.wallpaper { position: absolute; left: 930px; top: 0; }

/* browser */
.chrome { position: absolute; left: 0; top: 0; width: 930px; height: 1020px; display: flex; flex-direction: column; border: 1px solid #6e706c; background: #282c28; font-family: "Open Sans", "Noto Sans", sans-serif; }
.tabstrip { height: 54px; display: flex; align-items: flex-start; padding: 7px 0 0 8px; }
.tabsearch { width: 38px; height: 37px; margin-top: 1px; border-radius: 12px; background: #3a3a38; display: flex; align-items: center; justify-content: center; }
.ctab { position: relative; width: 318px; height: 47px; margin-left: 10px; background: #383b35; border-radius: 12px 12px 0 0; display: flex; align-items: center; padding: 0 16px 8px 13px; }
.ctab::before, .ctab::after { content: ""; position: absolute; bottom: 0; width: 14px; height: 14px; }
.ctab::before { left: -14px; background: radial-gradient(circle at 0 0, transparent 13.500px, #383b35 14px); }
.ctab::after { right: -14px; background: radial-gradient(circle at 100% 0, transparent 13.500px, #383b35 14px); }
.ctitle { width: 231px; margin: 0 16px 0 14px; white-space: nowrap; font-size: 15.500px; letter-spacing: -.2px; color: #e6e6e2; mask-image: linear-gradient(90deg, #000 90%, transparent); }
.newtab { margin: 13px 0 0 20px; }
.winctl { margin: 12px 0 0 356px; }
.toolbar { height: 63px; background: #383b35; border-radius: 12px 12px 0 0; display: flex; align-items: center; }
.nav { margin-left: 21px; }
.omni { width: 424px; height: 46px; margin-left: 26px; border-radius: 23px; background: #212521; display: flex; align-items: center; padding: 0 21px 0 7px; }
.site { width: 33px; height: 33px; border-radius: 50%; background: #383b35; display: flex; align-items: center; justify-content: center; margin-right: 11px; }
.url { flex: 1; font-size: 18px; letter-spacing: .1px; color: #e3e5df; white-space: nowrap; padding-bottom: 1px; }
.url i { color: #bfc3b8; }
.ext { margin-left: 27px; }
.ext.e1 { margin-left: 25px; }
.vsep { width: 3px; height: 22px; margin: 0 26px 0 22px; background: #50534c; border-radius: 2px; }
.avatar { width: 28px; height: 28px; margin-left: 24px; border-radius: 50%; background: #5d4037; color: #f2eeec; display: flex; align-items: center; justify-content: center; font: 15px "Open Sans", sans-serif; }
.dots3 { margin-left: 33px; }
.bookmarks { height: 48px; background: #383b35; display: flex; align-items: center; padding-left: 6px; padding-bottom: 10px; }
.bookmarks span { width: 44px; display: flex; justify-content: center; }
.bookmarks span svg { width: 22px; height: 22px; }
.idc b { width: 22px; height: 22px; background: #fff; color: #222; font: bold 5.500px/22px "DejaVu Sans", sans-serif; letter-spacing: -.3px; text-align: center; }
.idc i { color: #e0208c; }
.bookmarks em { width: 123px; margin-left: -3px; white-space: nowrap; font-size: 16px; letter-spacing: -.32px; color: #c9ccc3; }
.more { margin-left: 42px; }
.viewport { flex: 1; display: flex; background: #fcfcfc; overflow: hidden; }
.page { width: 906px; padding-left: 36px; overflow: hidden; }
.vscroll { width: 22px; background: #efefef; display: flex; flex-direction: column; align-items: center; }
.up, .down { border: 6px solid transparent; }
.up { border-bottom: 7px solid #505050; margin-top: 2px; }
.down { border-top: 7px solid #505050; margin-top: auto; }
.thumb { width: 18px; height: 41px; background: #c1c1c1; margin-top: 218px; }

/* documentation page */
.shot { width: 834px; height: 346px; background: linear-gradient(#300a24, #300a24) 0 100% / 525px 2px no-repeat, #efebe7; display: flex; color: #222; font: 10.400px "DejaVu Sans", sans-serif; }
.sdock { width: 398px; height: 344px; display: flex; flex-direction: column; }
.sdots { height: 7px; flex: none; width: 16px; margin-left: 191px; background: radial-gradient(circle, #aaa .8px, transparent 1px) 0 2px / 3px 3px repeat-x; }
article { color: #404040; font: 22px/33px Lato, sans-serif; }
h2 { margin: 0; padding-top: 39px; height: 105px; font: bold 31px/36px "DejaVu Serif Condensed", "DejaVu Serif", serif; font-stretch: condensed; letter-spacing: -.1px; white-space: nowrap; }
article p { margin: 0 0 33px; white-space: nowrap; }
article ol { margin: 0 0 33px; padding-left: 33px; white-space: nowrap; list-style: none; counter-reset: n; }
article li { counter-increment: n; }
article li::before { content: counter(n) "."; float: left; width: 21px; margin-left: -21px; letter-spacing: 0; }
.lead { letter-spacing: .045px; }
.two { letter-spacing: -.16px; }
.first { height: 33px; margin-bottom: 3px; letter-spacing: -.1px; }
.k2 { letter-spacing: -.096px; }
.k3 { letter-spacing: -.045px; }
.k4 { letter-spacing: -.08px; }
.k5 { letter-spacing: -.2px; }
.k5 strong { letter-spacing: -.01px; }
code { display: inline-block; height: 20px; margin: 0 0 0 -1px; padding: 0 7px; border: 1px solid #e1e4e5; background: #fff; color: #000; font: 15px/18px "DejaVu Sans Mono", monospace; letter-spacing: 0; vertical-align: 0; }

/* shared Qt widgets */
.dockhead { display: flex; align-items: center; background: #b6b6b6; flex: none; }
.dockhead .sq { margin-left: auto; border: 1px solid #999; border-radius: 2px; background: linear-gradient(#fff, #f2f2f2); }
.tabs { display: flex; align-items: flex-end; flex: none; position: relative; z-index: 1; }
.tabs span { display: flex; align-items: center; justify-content: center; white-space: nowrap; overflow: hidden; border: 1px solid #b4b4b4; border-right: 0; padding-right: 2px; background: linear-gradient(#ebebeb, #e4e4e4); }
.tabs span.on { background: #fcfcfc; border-bottom-color: #fcfcfc; border-radius: 3px 3px 0 0; position: relative; z-index: 1; }
.tabs span.cut { justify-content: flex-start; }
.tabs b { display: flex; align-items: center; justify-content: center; border: 1px solid #b0b0b0; border-radius: 2px; background: #f8f8f8; }
.tabs b i { border: 4px solid transparent; border-left: 5px solid #333; border-right: 0; }
.tabs b.dim i { border-left: 0; border-right: 5px solid #bbb; }
.pane { display: flex; border: 1px solid #a9a9a9; background: #fcfcfc; flex: none; }
.duo { display: flex; }
.pane label { display: block; white-space: nowrap; margin-left: -1px; }
.grp { border: 1px solid #dcdcdc; border-radius: 2px; background: #f9f9f9; display: flex; flex-direction: column; }
button { font: inherit; color: #111; padding: 0; border: 1px solid #a8a8a8; border-radius: 3px; background: linear-gradient(#fefefe, #efefef); white-space: nowrap; display: flex; align-items: center; justify-content: center; flex: none; }
button.off { color: #bebebe; border-color: #c8c8c8; background: linear-gradient(#f8f8f8, #f0f0f0); }
button.last { margin-top: auto; }
.grp p { margin: 0; white-space: nowrap; }
.combo { position: relative; border: 1px solid #a8a8a8; border-radius: 3px; background: linear-gradient(#fefefe, #ececec); display: flex; align-items: center; flex: none; }
.combo::after { content: ""; margin-left: auto; margin-right: 7px; border: 4px solid transparent; border-top: 4px solid #555; border-bottom: 0; }
.spinrow { display: flex; align-items: center; justify-content: space-between; white-space: nowrap; }
.spin { border: 1px solid #a8a8a8; border-radius: 3px; background: #fff; display: flex; align-items: center; overflow: hidden; }
.spin b { margin-left: auto; height: 100%; border-left: 1px solid #b8b8b8; background: #f4f4f4; display: flex; flex-direction: column; align-items: center; justify-content: space-evenly; }
.spin b::before, .spin b::after { content: ""; border: 4px solid transparent; }
.spin b::before { border-bottom: 4px solid #555; border-top: 0; }
.spin b::after { border-top: 4px solid #555; border-bottom: 0; }
.checks div { display: flex; align-items: center; white-space: nowrap; }
.cb { border: 1px solid #b4b4b4; background: #fff; display: block; flex: none; }
.tri { width: 0; height: 0; border: 4px solid transparent; display: block; }
.tri.l { border-right: 5px solid #333; border-left: 0; }
.tri.r { border-left: 5px solid #333; border-right: 0; }
.vd { width: 3px; height: 18px; background: radial-gradient(circle, #aaa .8px, transparent 1px) 0 0 / 3px 3px repeat-y; }

/* panel inside the documentation image */
.shot .dockhead { height: 19px; background: #b8b4b1; padding: 0 2px 0 5px; }
.shot .dockhead span { margin-left: 6px; }
.shot .dockhead .sq { width: 15px; height: 15px; margin-top: -1px; }
.shot .tabs { margin: 8px 0 0 6px; height: 23px; }
.shot .tabs span { height: 22px; }
.shot .tabs span.on { height: 23px; background: #fcf8f5; border-bottom-color: #fcf8f5; }
.shot .tabs span.cut { padding: 0 0 0 9px; }
.shot .tabs b { width: 13px; height: 22px; }
.shot .pane { width: 384px; height: 257px; margin: -1px 0 0 6px; background: #fcf8f5; }
.shot .lcol { width: 201px; margin-left: 10px; }
.shot .grp { background: #f8f5f2; }
.shot label { height: 18px; line-height: 18px; margin-top: 7px; }
.shot .c1 { width: 101px; margin-right: 1px; }
.shot .c2 { width: 99px; }
.shot .cmds { height: 147px; padding: 8px 7px 6px 6px; gap: 3.700px; }
.shot .cmds button { height: 20px; }
.shot .query { height: 147px; padding: 4px 7px 6px 5px; }
.shot .query p { height: 24.500px; line-height: 24.500px; }
.shot .combo { height: 20.300px; padding-left: 4px; }
.shot .pathl { margin-top: 24px; }
.shot .path { height: 32px; padding: 4px 7px 0 6px; }
.shot .rcol { width: 156px; margin-left: 6px; }
.shot .opts { height: 221px; padding: 9px 10px 0 8px; }
.shot .spinrow { height: 20px; margin-bottom: 2px; }
.shot .spin { height: 19px; padding-left: 3px; }
.shot .spin b { width: 13px; }
.shot .checks { margin-top: 3px; }
.shot .checks div { height: 19.250px; }
.shot .cb { width: 13px; height: 13px; margin-right: 4px; }
.shot .reset { width: 44px; height: 20px; margin-top: 11px; }
.sash { display: flex; width: 19px; padding: 48px 0 0 2px; flex: none; }
.sash .tri { margin: 3px 0 0 4px; }
.sash.r { width: 10px; padding-left: 0; }
.sash.r .tri { margin-left: 3px; }
.sview { width: 407px; flex: none; }
.sfps { text-align: right; padding: 3px 8px 0 0; }

/* terminal */
.term { position: absolute; left: 960px; top: 0; width: 960px; height: 1020px; border: 1px solid #6e6a6c; background: #300a24; display: flex; flex-direction: column; }
.term header { height: 50px; background: #333; display: flex; align-items: center; color: #fff; }
.ttab { align-self: flex-end; width: 300px; height: 40px; margin-left: 11px; padding-left: 11px; background: #300a24; border-radius: 9px 9px 0 0; display: flex; align-items: center; }
.ttab span { width: 205px; margin: 2px 19px 0 13px; overflow: hidden; white-space: nowrap; font: 600 15.500px "Open Sans", sans-serif; }
.tplus { margin: 11px 14px 0 19px; }
.tsep { width: 1px; height: 30px; margin: 10px 12px 0 0; background: #484848; }
.tchev { margin-top: 12px; }
.twin { margin-left: 427px; }
.tbody { height: 945px; display: flex; flex-direction: column; justify-content: flex-end; padding: 0 0 10px 10px; }
.tline { color: #f0edef; font: 21.600px/25px "DejaVu Sans Mono", monospace; white-space: pre; -webkit-text-stroke: .4px #f0edef; }
.cursor { width: 13px; height: 25px; background: #cff6dc; }
.tscroll { position: absolute; left: 949px; top: 964px; width: 3px; height: 30px; background: #8d7c88; border-radius: 2px; }

/* rviz */
.rviz { position: absolute; left: 939px; top: 58px; width: 965px; height: 881px; background: #bfbfbf; border-radius: 4px; box-shadow: 3px 5px 16px rgba(0, 0, 0, .65); padding: 0 6px 6px; font: 12px "DejaVu Sans", sans-serif; color: #111; display: flex; flex-direction: column; }
.rviz header { height: 27px; display: flex; align-items: center; justify-content: space-between; color: #5e5e5e; flex: none; }
.rviz header b { font: bold 13.300px "DejaVu Sans", sans-serif; letter-spacing: .15px; margin-left: 70px; margin-top: -2px; }
.rviz header span { display: flex; gap: 3px; }
.wicon { width: 16px; height: 14px; border: 1px solid #000; border-top-width: 4px; background: #fff; }
.inner { flex: 1; background: #eeeeee; }
.rviz nav { height: 20px; border-bottom: 1px solid #d2d2d2; display: flex; align-items: center; padding-left: 10px; gap: 14.500px; }
.rtools { height: 38px; border-bottom: 1px solid #b4b4b4; background: linear-gradient(#fafafa, #ececec); display: flex; align-items: center; padding-top: 1px; font-size: 11px; }
.handle { width: 5px; height: 18px; margin: 0 3px 0 5px; background: radial-gradient(circle, #bbb .8px, transparent 1px) 0 0 / 3px 3px; }
.tool { display: flex; align-items: center; gap: 1.500px; white-space: nowrap; }
.tool b { font-weight: normal; padding-top: 2px; }
.tool.act { width: 86px; height: 31px; padding-left: 2px; border: 1px solid #ababab; border-radius: 3px; background: #dcdcdc; gap: 0; }
.t2 { width: 120px; margin-left: 3px; }
.t3 { width: 78px; }
.t4 { width: 92px; }
.rsep { width: 1px; height: 19px; background: #ccc; }
.pm { margin-left: 13px; align-self: flex-start; margin-top: 8px; }
.work { display: flex; padding-top: 1px; }
.dock { width: 496px; display: flex; flex-direction: column; flex: none; }
.dock .dockhead .sq { width: 18px; height: 17px; margin-top: -2px; margin-right: 2px; border-radius: 3px; }
.d1 { height: 23px; padding-left: 4px; }
.d1 span { margin-left: 6px; }
.d2 { height: 22px; padding-left: 8px; }
.d2 span { margin-left: 7px; padding-top: 2px; }
.tree { height: 239px; border: 1px solid #b0b0b0; border-top: 0; background: #fff; display: flex; overflow: hidden; flex: none; }
.rows { flex: 1; overflow: hidden; }
.row { display: flex; height: 18px; line-height: 20px; white-space: nowrap; }
.nm { width: 198px; border-right: 1px solid #d9d9d9; position: relative; overflow: hidden; }
.nm.l1 { padding-left: 43px; }
.nm.l2 { padding-left: 63px; }
.vl { padding-left: 2px; display: flex; align-items: flex-start; }
.up1 { margin-top: -1px; }
.row.sel { background: #308cc6; color: #fff; }
.row.sel .nm { border-color: #2a7eb4; }
.ar { position: absolute; border: 4px solid transparent; }
.ar.right { left: 28px; top: 5px; border-left-color: #555; }
.ar.down { left: 26px; top: 7px; border-top-color: #1a3c58; }
.vl .cb { width: 14px; height: 14px; margin-top: 2px; }
.sw { width: 12px; height: 12px; margin: 3px 4px 0 3px; border: 1px solid #000; }
.tsb { width: 14px; border-left: 1px solid #b4b4b4; background: #e0e0e0; display: flex; flex-direction: column; }
.tb { height: 14px; background: #f4f4f4; border-bottom: 1px solid #b4b4b4; display: flex; align-items: center; justify-content: center; }
.tb::before { content: ""; border: 4px solid transparent; border-bottom: 4px solid #555; border-top: 0; }
.tb.d { margin-top: auto; border: 0; border-top: 1px solid #b4b4b4; }
.tb.d::before { border-top: 4px solid #555; border-bottom: 0; }
.th { height: 74px; margin-top: 43px; background: linear-gradient(90deg, #fdfdfd, #eee); border: solid #b4b4b4; border-width: 1px 0; }
.hd { height: 5px; width: 16px; margin-left: 241px; background: radial-gradient(circle, #aaa .8px, transparent 1px) 0 1px / 3px 3px repeat-x; flex: none; }
.hd.h2 { height: 10px; background-position: 0 5px; }
.desc { height: 84px; border: 1px solid #b0b0b0; background: #fff; padding: 5px 4px; font-weight: bold; flex: none; }
.btns { display: flex; gap: 6px; margin-top: 6px; padding: 0 2px; flex: none; }
.btns button { flex: 1; height: 23px; }
.dock .tabs { margin: 9px 0 0 9px; height: 26px; }
.dock .tabs span { height: 24px; padding-top: 2px; }
.dock .tabs span.on { height: 26px; }
.dock .tabs span.cut { padding-left: 11px; }
.dock .tabs b { width: 15px; height: 26px; }
.dock .pane { width: 478px; height: 306px; margin: -1px 0 0 9px; }
.dock .lcol { width: 231px; margin-left: 11px; }
.dock label { height: 21px; line-height: 23px; margin-top: 8px; }
.dock .c1 { width: 116px; margin-right: 1px; }
.dock .c2 { width: 114px; }
.dock .cmds { height: 168px; padding: 10px 8px 7px 7px; gap: 4px; }
.dock .cmds button { height: 23px; }
.dock .query { height: 168px; padding: 5px 8px 7px 7px; }
.dock .query p { height: 28px; line-height: 30px; }
.dock .query .p1 { line-height: 28px; }
.dock .query .p3 { height: 29px; line-height: 30px; }
.dock .combo { height: 23px; padding-left: 4px; }
.dock .pathl { margin-top: 39px; }
.dock .path { height: 38px; padding: 5px 8px 0 7px; }
.dock .rcol { width: 217px; margin-left: 7px; }
.dock .opts { height: 266px; padding: 11px 11px 0 10px; }
.dock .spinrow { height: 22px; margin-bottom: 3px; }
.dock .spinrow span { padding-top: 1px; }
.dock .spin { height: 22px; padding-left: 4px; }
.dock .spin b { width: 15px; }
.dock .checks { margin-top: 15px; }
.dock .checks div { height: 22px; }
.dock .checks span { padding-top: 1px; }
.dock .cb { width: 14px; height: 14px; margin-right: 5px; }
.dock .vl .cb { margin-right: 0; }
.dock .reset { width: 51px; height: 22px; margin: 13px 0 0 2px; padding-top: 1px; }
.rsash { width: 22px; display: flex; align-items: flex-start; padding-top: 373px; }
.rsash .vd { margin: 0 7px 0 2px; }
.rsash .tri { margin-top: 4px; }
.rview { width: 419px; }
.fps { text-align: right; padding: 4px 8px 0 0; }
.rsash2 { width: 16px; padding-top: 377px; display: flex; flex-direction: column; }
.rsash2 .tri { margin-left: 5px; }
.grip { margin-top: auto; margin-left: 4px; }

/* taskbar */
.taskbar { position: absolute; left: 0; top: 1020px; width: 1919px; height: 59px; background: #1c1c1c; border-top: 1px solid #3e3e3e; display: flex; justify-content: space-between; }
.apps { display: flex; margin-left: 658px; }
.apps > span { position: relative; width: 55px; height: 58px; display: flex; align-items: center; justify-content: center; }
.apps > span > svg { width: 30px; height: 30px; }
.apps .run::after { content: ""; position: absolute; left: 24px; bottom: 5px; width: 8px; height: 4px; border-radius: 2px; background: #9a9a9a; }
.badge { position: absolute; left: 29px; top: 8px; width: 20px; height: 20px; border-radius: 50%; background: #5d4037; color: #cfc6c2; font: 11px/20px "Open Sans", sans-serif; text-align: center; }
.rv em { color: #f4f4f4; font: bold 20px/20px "Liberation Sans", sans-serif; transform: scaleX(.74); margin-top: -2px; white-space: nowrap; }
.rv small { font-size: 14px; vertical-align: 3px; }
.rv .tux { position: absolute; left: 30px; top: 31px; width: 14px !important; height: 14px !important; }
.tray { display: flex; align-items: center; color: #fff; padding-right: 26px; }
.wf { margin-left: 23px; }
.sp { margin-left: 10px; }
.ba { margin-left: 10px; margin-top: -3px; }
.clock { width: 97px; text-align: right; font: 14.800px/20px "Open Sans", sans-serif; letter-spacing: -.1px; }
.bell { margin-left: 11px; }
</style>
